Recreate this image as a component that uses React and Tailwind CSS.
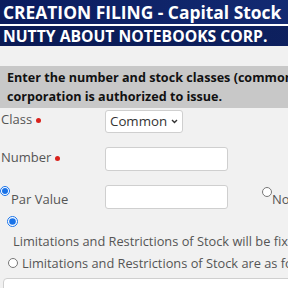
import React, { useState } from 'react'

function Dot() {
  return <span className="inline-block w-[5px] h-[5px] rounded-full bg-[#d9221c] ml-[4px] mb-[1px] align-middle" />
}

export default function App() {
  const [par, setPar] = useState('par')
  const [limit, setLimit] = useState('fixed')

  return (
    <div className="w-[288px] h-[288px] overflow-hidden bg-[#f1f1f1] font-['Open_Sans',sans-serif]">
      <div className="w-[700px]">
        {/* Header */}
        <div className="h-[24px] bg-gradient-to-r from-[#0b1c5e] to-[#1f3f8f] text-white font-bold text-[17.4px] leading-[24px] pl-[3px] whitespace-nowrap">
          CREATION FILING - Capital Stock
        </div>
        <div className="h-[2px] bg-white" />
        <div className="h-[20px] bg-gradient-to-r from-[#0a1a55] to-[#132a6d] text-white font-bold text-[15.7px] leading-[20px] pl-[3px] whitespace-nowrap">
          NUTTY ABOUT NOTEBOOKS CORP.
        </div>

        {/* Instructions */}
        <div className="mt-[20px] bg-[#c8c8c8] px-[7px] py-[2px] text-[12.6px] leading-[19px] font-bold text-[#111] w-[430px]">
          Enter the number and stock classes (common, preferred) the corporation is authorized to issue.
        </div>

        {/* Class */}
        <div className="flex items-start mt-[2px] text-[13px] text-[#555]">
          <div className="w-[105px] pl-[1px] leading-[18px]">Class<Dot /></div>
          <div className="relative w-[78px] h-[23px]">
            <select className="appearance-none w-full h-full bg-white border border-[#cfcfcf] rounded-[3px] text-[13.3px] text-[#333] pl-[4px] pr-[10px] leading-[21px]">
              <option>Common</option>
              <option>Preferred</option>
            </select>
            <svg className="absolute right-[5px] top-[9px] pointer-events-none" width="7" height="5" viewBox="0 0 7 5">
              <path d="M1 1l2.5 2.5L6 1" fill="none" stroke="#333" strokeWidth="1.4" />
            </svg>
          </div>
        </div>

        {/* Number */}
        <div className="flex items-start mt-[14px] text-[13px] text-[#555]">
          <div className="w-[105px] pl-[1px] leading-[18px] pt-[1px]">Number<Dot /></div>
          <input className="w-[123px] h-[24px] bg-white border border-[#cfcfcf] rounded-[3px]" />
        </div>

        {/* Par value */}
        <div className="flex items-start mt-[14px] text-[13px] text-[#555]">
          <label className="w-[105px] flex items-start leading-[18px]">
            <input
              type="radio"
              checked={par === 'par'}
              onChange={() => setPar('par')}
              className="w-[10px] h-[10px] m-0 mt-[1px] accent-[#1a73e8]"
            />
            <span className="mt-[5px] ml-[1px]">Par Value</span>
          </label>
          <input className="w-[123px] h-[24px] bg-white border border-[#cfcfcf] rounded-[3px]" />
          <label className="ml-[34px] flex items-start leading-[18px]">
            <input
              type="radio"
              checked={par === 'no'}
              onChange={() => setPar('no')}
              className="w-[10px] h-[10px] m-0 mt-[2px] accent-[#1a73e8]"
            />
            <span className="mt-[5px]">No Par Value</span>
          </label>
        </div>

        {/* Limitations */}
        <div className="mt-[4px] text-[12.8px] text-[#555]">
          <div className="pl-[7px]">
            <input
              type="radio"
              checked={limit === 'fixed'}
              onChange={() => setLimit('fixed')}
              className="w-[11px] h-[11px] m-0 accent-[#1a73e8]"
            />
          </div>
          <div className="pl-[13px] leading-[18px] whitespace-nowrap">
            Limitations and Restrictions of Stock will be fixed by the Board of Directors.
          </div>
          <label className="flex items-center pl-[8px] mt-[4px] leading-[18px] whitespace-nowrap">
            <input
              type="radio"
              checked={limit === 'follows'}
              onChange={() => setLimit('follows')}
              className="w-[10px] h-[10px] m-0 mr-[4px] accent-[#1a73e8]"
            />
            Limitations and Restrictions of Stock are as follows:
          </label>
          <div className="ml-[3px] mt-[6px] h-[60px] bg-white border border-[#cfcfcf] rounded-[4px]" />
        </div>
      </div>
    </div>
  )
}
